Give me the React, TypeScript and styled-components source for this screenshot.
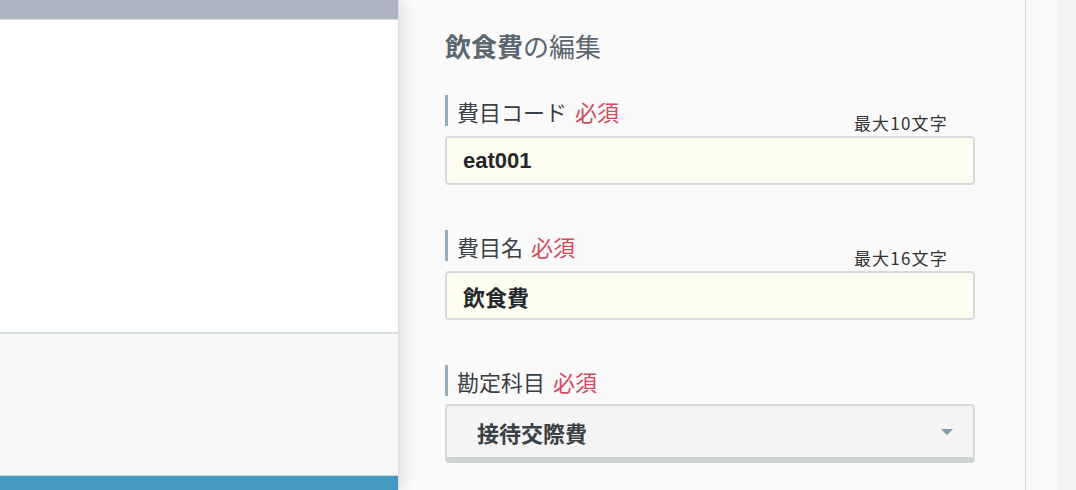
import React from "react";
import styled, { createGlobalStyle } from "styled-components";

const GlobalStyle = createGlobalStyle`
  html, body {
    margin: 0;
    padding: 0;
    background: #f4f4f4;
  }
  body {
    font-family: "Liberation Sans", "Noto Sans CJK JP", sans-serif;
  }
  * {
    box-sizing: border-box;
  }
`;

type Field = {
  label: string;
  value: string;
  maxLength?: number;
};

const fields: Field[] = [
  { label: "費目コード", value: "eat001", maxLength: 10 },
  { label: "費目名", value: "飲食費", maxLength: 16 },
];

export default function App() {
  return (
    <>
      <GlobalStyle />
      <Page>
        <ListPane>
          <TopBar />
          <ListBody />
          <ListFooter />
          <ActionBar />
        </ListPane>
        <EditPanel>
          <Title>
            <strong>飲食費</strong>の編集
          </Title>
          {fields.map((f) => (
            <FormGroup key={f.label}>
              <LabelRow>
                <Label>
                  {f.label}
                  <Required>必須</Required>
                </Label>
                <Hint>最大{f.maxLength}文字</Hint>
              </LabelRow>
              <TextInput>{f.value}</TextInput>
            </FormGroup>
          ))}
          <FormGroup>
            <LabelRow>
              <Label $tight>
                勘定科目
                <Required>必須</Required>
              </Label>
            </LabelRow>
            <Select>
              <span>接待交際費</span>
              <Caret viewBox="0 0 12 6">
                <path d="M0 0h12L6 6z" />
              </Caret>
            </Select>
          </FormGroup>
        </EditPanel>
        <Gutter />
      </Page>
    </>
  );
}

const Page = styled.div`
  display: flex;
  width: 1076px;
  height: 490px;
  overflow: hidden;
`;

const ListPane = styled.div`
  position: relative;
  z-index: 1;
  width: 399px;
  flex-shrink: 0;
  display: flex;
  flex-direction: column;
  border-right: 1px solid #dcdfe0;
  box-shadow: 3px 0 14px rgba(0, 0, 0, 0.13);
`;

const TopBar = styled.div`
  height: 20px;
  background: #adb4c0;
  border-bottom: 1px solid #d9dde3;
`;

const ListBody = styled.div`
  height: 314px;
  background: #ffffff;
  border-bottom: 2px solid #d5dcdc;
`;

const ListFooter = styled.div`
  height: 142px;
  background: #f5f7f9;
  border-bottom: 1px solid #cfd6d8;
`;

const ActionBar = styled.div`
  flex: 1;
  background: #4399c0;
`;

const EditPanel = styled.div`
  width: 627px;
  flex-shrink: 0;
  background: #fafafa;
  border-right: 1px solid #d0d5d5;
  padding: 29px 50px 0 46px;
`;

const Gutter = styled.div`
  width: 31px;
  flex-shrink: 0;
  background: #fafafa;
  border-right: 19px solid #f4f4f4;
  flex-grow: 1;
`;

const Title = styled.h2`
  margin: 0 0 32px;
  font-size: 26px;
  line-height: 34px;
  font-weight: 400;
  color: #5a6670;
  font-family: "Noto Sans CJK JP", sans-serif;

  strong {
    font-weight: 700;
  }
`;

const FormGroup = styled.div`
  margin-bottom: 45px;
`;

const LabelRow = styled.div`
  display: flex;
  justify-content: space-between;
  align-items: flex-end;
`;

const Label = styled.label<{ $tight?: boolean }>`
  display: flex;
  align-items: center;
  gap: 8px;
  height: 31px;
  margin-bottom: ${(p) => (p.$tight ? "8px" : "10px")};
  padding-left: 9px;
  border-left: 3px solid #95adbb;
  font-family: "Noto Sans CJK JP", sans-serif;
  font-size: 22px;
  color: #3b4045;
`;

const Required = styled.span`
  color: #d24a62;
`;

const Hint = styled.span`
  margin: 0 27px 3px 0;
  font-family: "Noto Sans CJK JP", sans-serif;
  font-size: 17px;
  line-height: 20px;
  letter-spacing: 1.2px;
  color: #333333;
`;

const TextInput = styled.div`
  height: 49px;
  display: flex;
  align-items: center;
  padding: 0 16px;
  background: #fdfdf0;
  border: 2px solid #d6dada;
  border-radius: 4px;
  font-size: 22px;
  font-weight: 700;
  color: #23282d;
`;

const Select = styled.div`
  height: 59px;
  display: flex;
  align-items: center;
  justify-content: space-between;
  padding: 0 20px 0 30px;
  background: #f4f4f4;
  border: 2px solid #d6dada;
  border-bottom: 6px solid #cfd3d3;
  border-radius: 4px;
  font-family: "Noto Sans CJK JP", sans-serif;
  font-size: 22px;
  font-weight: 700;
  color: #3b4045;
`;

const Caret = styled.svg`
  width: 12px;
  height: 6px;
  fill: #7f9bab;
`;
